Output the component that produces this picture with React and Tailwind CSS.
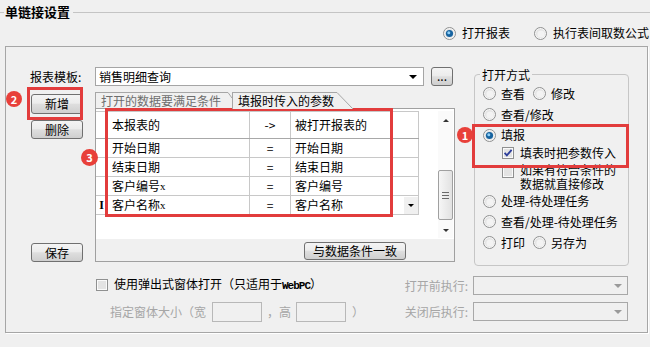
import React from 'react';

function Radio({ checked }) {
  return (
    <svg width="13" height="13" viewBox="0 0 13 13" className="shrink-0">
      <circle cx="6.5" cy="6.5" r="6" fill="#f6f6f6" stroke="#8f9090" />
      <circle cx="6.5" cy="6.5" r="4.6" fill="#e4e4e4" />
      <circle cx="7" cy="7" r="3.6" fill="#f3f3f3" />
      {checked && <circle cx="6.5" cy="6.5" r="3.6" fill="#17639f" />}
      {checked && <circle cx="5.8" cy="5.8" r="1.5" fill="#8fd0f8" />}
    </svg>
  );
}

function Check({ checked }) {
  return (
    <svg width="12" height="12" viewBox="0 0 12 12" className="shrink-0">
      <rect x="0.5" y="0.5" width="11" height="11" fill="#fafafa" stroke="#8f9090" />
      <rect x="2" y="2" width="8" height="8" fill="#e3e3e3" />
      {checked && <path d="M2.6 5.8 L4.9 8.4 L9.6 2.8" stroke="#2c3c9a" strokeWidth="1.8" fill="none" />}
    </svg>
  );
}

function Down({ gray }) {
  return (
    <span className={gray
      ? 'w-0 h-0 border-l-[4px] border-r-[4px] border-t-[4px] border-l-transparent border-r-transparent border-t-[#9a9a9a]'
      : 'w-0 h-0 border-l-[4px] border-r-[4px] border-t-[4px] border-l-transparent border-r-transparent border-t-black'} />
  );
}

function Btn({ children, className = '' }) {
  return (
    <div className={`flex items-center justify-center border border-[#707070] rounded-[3px] bg-[linear-gradient(#f4f4f4,#ececec_45%,#dedede_52%,#cfcfcf)] leading-none ${className}`}>
      {children}
    </div>
  );
}

const rows = [
  ['开始日期', '开始日期'],
  ['结束日期', '结束日期'],
  ['客户编号', '客户编号', true],
  ['客户名称', '客户名称', true],
];

export default function App() {
  return (
    <div className="relative w-[650px] h-[347px] overflow-hidden bg-[#f0f0f0] text-[12px] leading-[14px] text-black font-['Noto_Sans_CJK_SC','Liberation_Sans',sans-serif]">
      {/* group title */}
      <div className="flex items-center h-[24px]">
        <div className="w-[4px] h-px bg-[#c4c4c4]" />
        <span className="px-[1px] text-[13px] font-bold leading-[16px]">单链接设置</span>
        <div className="flex-1 h-px bg-[#c4c4c4] ml-[2px]" />
      </div>

      {/* open type */}
      <div className="flex items-center h-[18px] pl-[443px]">
        <Radio checked />
        <span className="ml-[6px]">打开报表</span>
        <span className="ml-[24px] flex"><Radio /></span>
        <span className="ml-[6px]">执行表间取数公式</span>
      </div>

      <div className="mt-[4px] ml-[5px] w-[643px] h-[287px] border border-[#a6a6a6] shadow-[1px_1px_0_#ffffff] flex flex-col">
        <div className="flex">
          {/* left part */}
          <div className="flex flex-col w-[449px]">
            <div className="flex items-center mt-[20px] h-[19px] pl-[24px]">
              <span className="w-[65px]">报表模板:</span>
              <div className="w-[329px] h-[19px] bg-white border border-[#a5a5a5] flex items-center justify-between pl-[3px] pr-[6px]">
                <span>销售明细查询</span>
                <Down />
              </div>
              <Btn className="ml-[7px] w-[22px] h-[19px] items-end pb-[3px]">...</Btn>
            </div>

            <div className="flex">
              <div className="flex flex-col ml-[25px] w-[52px]">
                <Btn className="mt-[8px] h-[20px]">新增</Btn>
                <Btn className="mt-[6px] h-[19px]">删除</Btn>
                <Btn className="mt-auto h-[19px]">保存</Btn>
              </div>

              <div className="ml-[12px] w-[360px] flex flex-col">
                {/* tabs */}
                <div className="mt-[6px] h-[16px] flex items-stretch">
                  <div className="w-[133px] border-l border-t border-[#a6a6a6] pl-[5px] text-[#6e6e6e] leading-[15px]">打开的数据要满足条件</div>
                  <svg width="4" height="16" className="shrink-0"><line x1="0" y1="0.5" x2="4" y2="6" stroke="#a6a6a6" /></svg>
                  <div className="relative z-10 h-[17px] flex bg-[#f0f0f0]">
                    <div className="w-[105px] border-l border-t border-[#a6a6a6] pl-[5px] leading-[16px]">填报时传入的参数</div>
                    <svg width="16" height="17" className="shrink-0"><line x1="0" y1="0.5" x2="16" y2="17" stroke="#a6a6a6" /></svg>
                  </div>
                </div>

                {/* panel */}
                <div className="h-[154px] border border-[#a0a0a0] flex flex-col">
                  <div className="h-[130px] bg-white flex">
                    <div className="mt-[2px] w-[323px] self-start border-t border-[#c8c8c8]">
                      <div className="h-[27px] flex border-b border-[#a8a8a8]">
                        <div className="w-[12px] border-r border-[#c8c8c8]" />
                        <div className="w-[142px] border-r border-[#c8c8c8] pl-[4px] flex items-center">本报表的</div>
                        <div className="w-[41px] border-r border-[#c8c8c8] flex items-center justify-center">-&gt;</div>
                        <div className="w-[128px] border-r border-[#c8c8c8] pl-[4px] flex items-center">被打开报表的</div>
                      </div>
                      {rows.map(([a, b, x], i) => (
                        <div key={i} className="h-[19px] flex border-b border-[#c8c8c8]">
                          <div className="w-[12px] border-r border-[#c8c8c8] flex items-center justify-center font-['Liberation_Serif',serif] font-bold">
                            {i === 3 ? 'I' : ''}
                          </div>
                          <div className="w-[142px] border-r border-[#c8c8c8] pl-[4px] flex items-center">
                            {a}{x && <span className="font-['Liberation_Serif',serif] text-[11px]">x</span>}
                          </div>
                          <div className="w-[41px] border-r border-[#c8c8c8] flex items-center justify-center">=</div>
                          <div className="w-[128px] border-r border-[#c8c8c8] pl-[4px] flex items-center justify-between">
                            <span>{b}</span>
                            {i === 3 && (
                              <span className="w-[14px] h-[17px] bg-[#f0f0f0] flex items-center justify-center">
                                <span className="w-0 h-0 border-l-[3px] border-r-[3px] border-t-[3px] border-l-transparent border-r-transparent border-t-black" />
                              </span>
                            )}
                          </div>
                        </div>
                      ))}
                    </div>

                    {/* scrollbar */}
                    <div className="ml-auto mr-[1px] mt-[2px] w-[15px] h-[127px] flex flex-col items-center bg-[#fafafa]">
                      <div className="h-[18px] flex items-center justify-center">
                        <span className="w-0 h-0 border-l-[3px] border-r-[3px] border-b-[3px] border-l-transparent border-r-transparent border-b-[#333333]" />
                      </div>
                      <div className="mt-[41px] w-[15px] h-[50px] rounded-[2px] border border-[#a0a0a0] bg-[linear-gradient(90deg,#f6f6f6,#e2e2e2)] flex flex-col items-center justify-center gap-[2px]">
                        <div className="w-[7px] h-px bg-[#6a6a6a]" />
                        <div className="w-[7px] h-px bg-[#6a6a6a]" />
                        <div className="w-[7px] h-px bg-[#6a6a6a]" />
                      </div>
                      <div className="mt-[2px] h-[16px] flex items-center justify-center">
                        <span className="w-0 h-0 border-l-[3px] border-r-[3px] border-t-[3px] border-l-transparent border-r-transparent border-t-[#333333]" />
                      </div>
                    </div>
                  </div>
                  <div className="flex-1 flex justify-end pr-[48px] pt-[3px]">
                    <Btn className="w-[102px] h-[18px]">与数据条件一致</Btn>
                  </div>
                </div>
              </div>
            </div>
          </div>

          {/* 打开方式 group */}
          <div className="ml-[19px] mt-[27px] w-[155px] h-[192px] rounded-[4px] border border-[#c6c6c6] flex flex-col">
            <span className="ml-[5px] -mt-[9px] px-[2px] w-fit bg-[#f0f0f0] leading-[17px]">打开方式</span>
            <div className="h-[21px] flex items-center pl-[8px]">
              <Radio /><span className="ml-[5px]">查看</span>
              <span className="ml-[8px] flex"><Radio /></span><span className="ml-[5px]">修改</span>
            </div>
            <div className="h-[21px] flex items-center pl-[8px]">
              <Radio /><span className="ml-[5px]">查看/修改</span>
            </div>
            <div className="h-[20px] flex items-center pl-[8px]">
              <Radio checked /><span className="ml-[5px]">填报</span>
            </div>
            <div className="h-[16px] flex items-center pl-[27px]">
              <Check checked /><span className="ml-[6px]">填表时把参数传入</span>
            </div>
            <div className="h-[30px] flex items-start pl-[27px] pt-[2px]">
              <span className="mt-[3px] flex"><Check /></span>
              <span className="ml-[6px] leading-[14px]">如果有符合条件的<br />数据就直接修改</span>
            </div>
            <div className="h-[20px] flex items-center pl-[8px]">
              <Radio /><span className="ml-[5px]">处理-待处理任务</span>
            </div>
            <div className="h-[21px] flex items-center pl-[8px]">
              <Radio /><span className="ml-[5px]">查看/处理-待处理任务</span>
            </div>
            <div className="h-[21px] flex items-center pl-[8px]">
              <Radio /><span className="ml-[5px]">打印</span>
              <span className="ml-[8px] flex"><Radio /></span><span className="ml-[5px]">另存为</span>
            </div>
          </div>
        </div>

        {/* bottom section */}
        <div className="flex">
          <div className="ml-[90px] flex flex-col">
            <div className="mt-[9px] h-[19px] flex items-center">
              <Check />
              <span className="ml-[6px]">使用弹出式窗体打开（只适用于<span className="font-['Liberation_Mono',monospace] text-[11px] font-bold tracking-[-1px]">WebPC</span>）</span>
            </div>
            <div className="mt-[8px] h-[20px] flex items-center pl-[14px] text-[#a6a6a6]">
              <span>指定窗体大小（宽</span>
              <div className="ml-[6px] w-[50px] h-[20px] border border-[#b8b8b8]" />
              <span className="ml-[5px]">，高</span>
              <div className="ml-[5px] w-[50px] h-[20px] border border-[#b8b8b8]" />
              <span className="ml-[6px]">）</span>
            </div>
          </div>
          <div className="ml-auto mr-[19px] flex flex-col text-[#a6a6a6]">
            <div className="mt-[10px] h-[19px] flex items-center justify-end">
              <span>打开前执行:</span>
              <div className="ml-[5px] w-[155px] h-[19px] border border-[#a8a8a8] flex items-center justify-end pr-[5px]"><Down gray /></div>
            </div>
            <div className="mt-[7px] h-[19px] flex items-center justify-end">
              <span>关闭后执行:</span>
              <div className="ml-[5px] w-[155px] h-[19px] border border-[#a8a8a8] flex items-center justify-end pr-[5px]"><Down gray /></div>
            </div>
          </div>
        </div>
      </div>

      {/* annotations */}
      <div className="absolute left-[27px] top-[87px] w-[56px] h-[33px] border-[3px] border-[#e23c3c]" />
      <div className="absolute left-[105px] top-[108px] w-[288px] h-[109px] border-[3px] border-[#e23c3c]" />
      <div className="absolute left-[472px] top-[124px] w-[157px] h-[44px] border-[3px] border-[#e23c3c]" />
      <div className="absolute left-[6px] top-[91px] w-[16px] h-[16px] rounded-full bg-[#e8403a] text-white text-[11px] font-bold leading-none flex items-center justify-center">2</div>
      <div className="absolute left-[81px] top-[149px] w-[17px] h-[17px] rounded-full bg-[#e8403a] text-white text-[11px] font-bold leading-none flex items-center justify-center">3</div>
      <div className="absolute left-[457px] top-[127px] w-[16px] h-[16px] rounded-full bg-[#e8403a] text-white text-[11px] font-bold leading-none flex items-center justify-center">1</div>
    </div>
  );
}
